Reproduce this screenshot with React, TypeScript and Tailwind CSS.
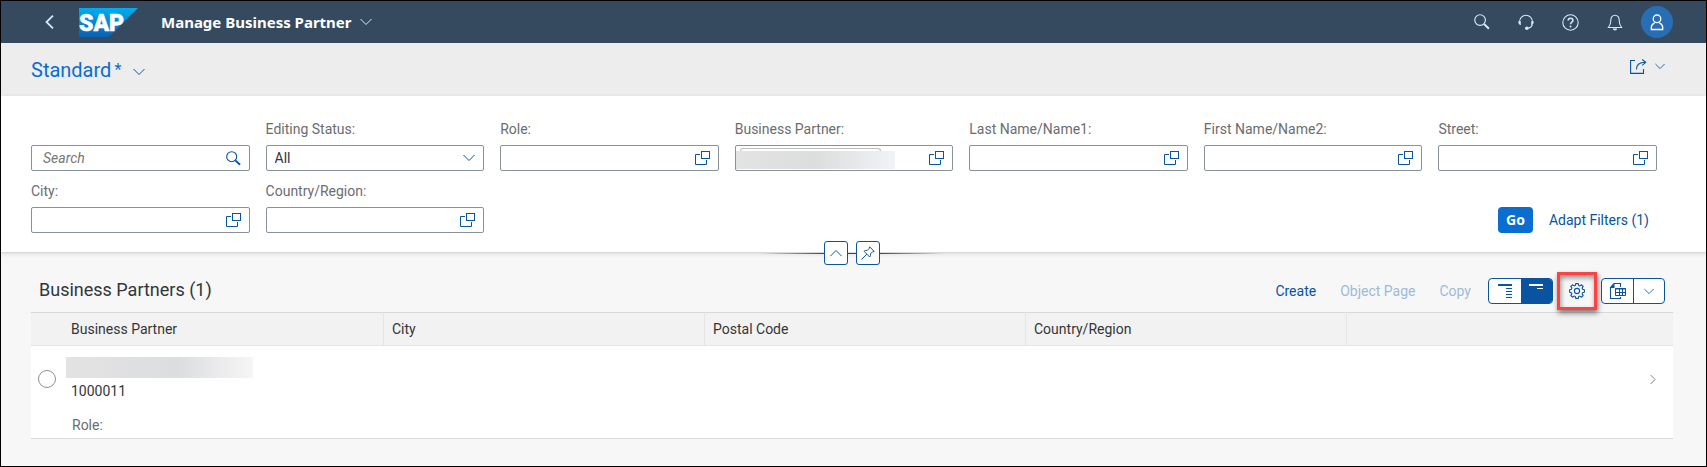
import type { ReactNode } from "react";

type IconProps = { className?: string };

const Chevron = ({ className = "" }: IconProps) => (
  <svg viewBox="0 0 12 8" className={className} fill="none" stroke="currentColor" strokeWidth="1" aria-hidden="true">
    <path d="M0.5 1 6 6.5 11.5 1" />
  </svg>
);

const SearchIcon = ({ className = "" }: IconProps) => (
  <svg viewBox="0 0 15 15" className={className} fill="none" stroke="currentColor" aria-hidden="true">
    <circle cx="5.7" cy="5.7" r="5" strokeWidth="1.1" />
    <path d="M9.4 9.4 14 13.8" strokeWidth="1.9" />
  </svg>
);

const ValueHelpIcon = () => (
  <svg viewBox="0 0 15 15" className="size-[15px]" fill="none" stroke="currentColor" aria-hidden="true">
    <path d="M5 3.5H0.5V13.5H11.5V9" />
    <rect x="6.5" y="0.5" width="8" height="7" />
  </svg>
);

const HeadsetIcon = () => (
  <svg viewBox="0 0 16 16" className="size-4" fill="none" stroke="currentColor" aria-hidden="true">
    <path d="M1.6 8A6.4 6.8 0 0 1 14.4 8" strokeWidth="1.1" />
    <path d="M0.4 7.2h2.4v4C1 11 0 9 0.4 7.2ZM15.6 7.2h-2.4v4C15 11 16 9 15.6 7.2Z" fill="currentColor" stroke="none" />
    <path d="M14.4 10.5C13.6 12.8 12 14.1 9.5 14.3" strokeWidth="1.1" />
    <circle cx="8.8" cy="14.2" r="1.8" fill="currentColor" stroke="none" />
  </svg>
);

const HelpIcon = () => (
  <svg viewBox="0 0 17 17" className="size-[17px]" fill="none" stroke="currentColor" aria-hidden="true">
    <circle cx="8.5" cy="8.5" r="7.7" strokeWidth="1.1" />
    <path d="M6.2 6.6C6.2 5 7.2 4.2 8.5 4.2S10.9 5 10.9 6.4C10.9 8 8.5 8.2 8.5 10.3" strokeWidth="1.6" />
    <circle cx="8.5" cy="12.4" r="1" fill="currentColor" stroke="none" />
  </svg>
);

const BellIcon = () => (
  <svg viewBox="0 0 16 17" className="h-[17px] w-4" fill="none" stroke="currentColor" strokeWidth="1.1" aria-hidden="true">
    <path d="M8 1.2C5.3 1.2 3.9 3.2 3.9 5.8C3.9 9.8 3.2 11.5 1.4 13.5H14.6C12.8 11.5 12.1 9.8 12.1 5.8C12.1 3.2 10.7 1.2 8 1.2Z" />
    <path d="M5.8 14.5H10.2C10 15.8 9.2 16.4 8 16.4S6 15.8 5.8 14.5Z" fill="currentColor" stroke="none" />
  </svg>
);

const PersonIcon = () => (
  <svg viewBox="0 0 14 17" className="h-[17px] w-[14px]" fill="none" stroke="currentColor" strokeWidth="1.3" aria-hidden="true">
    <circle cx="7" cy="4.8" r="3.8" />
    <path d="M4.6 8.8C2.4 9.8 1.3 11.5 1.3 13.5V15.5H12.7V13.5C12.7 11.5 11.6 9.8 9.4 8.8" />
  </svg>
);

const ShareIcon = () => (
  <svg viewBox="0 0 17 15" className="h-[15px] w-[17px]" fill="none" stroke="currentColor" strokeWidth="1.1" aria-hidden="true">
    <path d="M5 1.5H0.6V14.4H13.5V10" />
    <path d="M6.5 10.5C6.3 6 9 3.5 15.5 3.3M12.2 0.5 15.7 3.3 12.2 6.3" />
  </svg>
);

const PinIcon = () => (
  <svg viewBox="0 0 14 14" className="size-[14px]" fill="none" stroke="currentColor" strokeLinejoin="round" aria-hidden="true">
    <path d="M8.6 0.8 13.2 5.4 11.5 5.9 9.4 8C9.7 9.3 9.5 10.2 8.7 11L3 5.3C3.8 4.5 4.7 4.3 6 4.6L8.1 2.5Z" />
    <path d="M5.8 8.2 0.5 13.5" />
  </svg>
);

const GearIcon = () => (
  <svg viewBox="0 0 16 16" className="size-4" fill="none" stroke="currentColor" strokeWidth="1.1" strokeLinejoin="round" aria-hidden="true">
    <path d="M6.7 0.6H9.3L9.7 2.4L10.9 2.9L12.5 1.8L14.2 3.5L13.1 5.1L13.6 6.3L15.4 6.7V9.3L13.6 9.7L13.1 10.9L14.2 12.5L12.5 14.2L10.9 13.1L9.7 13.6L9.3 15.4H6.7L6.3 13.6L5.1 13.1L3.5 14.2L1.8 12.5L2.9 10.9L2.4 9.7L0.6 9.3V6.7L2.4 6.3L2.9 5.1L1.8 3.5L3.5 1.8L5.1 2.9L6.3 2.4Z" />
    <circle cx="8" cy="8" r="2.6" />
  </svg>
);

const DetailsIcon = () => (
  <svg viewBox="0 0 16 16" className="size-4" fill="none" stroke="currentColor" aria-hidden="true">
    <path d="M1 2H15" strokeWidth="2" />
    <path d="M9 5.5H15M9 8.5H15M9 11.5H15M9 14.5H15" />
  </svg>
);

const SummaryIcon = () => (
  <svg viewBox="0 0 16 16" className="size-4" fill="none" stroke="currentColor" aria-hidden="true">
    <path d="M1 2H15" strokeWidth="2" />
    <path d="M9 5.5H15" />
  </svg>
);

const ExportIcon = () => (
  <svg viewBox="0 0 17 17" className="size-[17px]" fill="none" stroke="currentColor" aria-hidden="true">
    <path d="M11.5 4V0.5H5L1.5 4.5V15.5H11.5V14" strokeWidth="1.1" />
    <path d="M1 5 5.5 0V5Z" fill="currentColor" stroke="none" />
    <path d="M6.5 5.5H16.5V12.5H6.5ZM6 6H17M6.5 9.5H16.5M10.5 6V12.5M13.5 6V12.5" />
  </svg>
);

const SapLogo = () => (
  <svg viewBox="0 0 59 29" className="h-[29px] w-[59px]" role="img" aria-label="SAP">
    <defs>
      <linearGradient id="sapBlue" x1="0" y1="0" x2="0" y2="1">
        <stop offset="0" stopColor="#00aeef" />
        <stop offset="1" stopColor="#0a5fb4" />
      </linearGradient>
    </defs>
    <path d="M0 0H59L30 29H0Z" fill="url(#sapBlue)" />
    <text x="0" y="23" fill="#fff" stroke="#fff" strokeWidth="0.5" fontFamily="Roboto, sans-serif" fontWeight="900" fontSize="23">
      SAP
    </text>
  </svg>
);

const inputBox = "flex h-[26px] items-center rounded-[2px] border border-[#89919a] bg-white";

function Field({ id, label, children }: { id: string; label?: string; children: ReactNode }) {
  return (
    <div className="flex min-w-0 flex-col gap-1.5">
      <label htmlFor={id} className="h-5 leading-5 whitespace-nowrap text-[#6a6d70]">
        {label}
      </label>
      {children}
    </div>
  );
}

function ValueHelpField({ id, label, masked = false }: { id: string; label: string; masked?: boolean }) {
  return (
    <Field id={id} label={label}>
      <div className={inputBox}>
        {masked && (
          <span className="flex h-full w-[159px] shrink-0 flex-col pt-0.5">
            <span className="ml-1 h-[3px] w-[141px] rounded-t-[3px] border border-b-0 border-[#bfbfbf]" />
            <span className="h-[18px] bg-linear-to-r from-[#e3e3e3] via-[#dcdddd] via-50% to-[#f2f3f5]" />
          </span>
        )}
        <input id={id} type="text" className="h-full w-0 min-w-0 flex-1 bg-transparent px-2 outline-none" />
        <button type="button" aria-label={`Select ${label}`} className="mr-2 text-[#0854a0]">
          <ValueHelpIcon />
        </button>
      </div>
    </Field>
  );
}

const columns = ["City", "Postal Code", "Country/Region"];

export default function App() {
  return (
    <div className="flex min-h-screen flex-col border border-black bg-[#f7f7f7] font-[Roboto,'Liberation_Sans',sans-serif] text-sm text-[#32363a]">
      <header className="flex h-[42px] items-center justify-between bg-[#354a5f] pr-[33px] pl-[40px] text-[#d1e8ff]">
        <div className="flex items-center">
          <button type="button" aria-label="Back" className="flex w-4 justify-center">
            <svg viewBox="0 0 9 14" className="h-[14px] w-[9px]" fill="none" stroke="currentColor" strokeWidth="1.8" aria-hidden="true">
              <path d="M8 0.7 1.5 7 8 13.3" />
            </svg>
          </button>
          <a href="#home" className="ml-[22px]">
            <SapLogo />
          </a>
          <button type="button" className="ml-[23px] flex items-center gap-2">
            <span className="font-['Noto_Sans',sans-serif] text-[15px] leading-5 font-bold text-white">Manage Business Partner</span>
            <Chevron className="h-2 w-3" />
          </button>
        </div>
        <div className="flex items-center gap-7">
          <button type="button" aria-label="Search">
            <SearchIcon className="size-4" />
          </button>
          <button type="button" aria-label="Support">
            <HeadsetIcon />
          </button>
          <button type="button" aria-label="Help">
            <HelpIcon />
          </button>
          <button type="button" aria-label="Notifications">
            <BellIcon />
          </button>
          <button type="button" aria-label="Profile" className="-ml-2.5 flex size-8 items-center justify-center rounded-full bg-[#286eb4] text-white">
            <PersonIcon />
          </button>
        </div>
      </header>

      <div className="flex h-[53px] items-center justify-between bg-[#ededed] pr-[41px] pl-[30px]">
        <button type="button" className="flex items-center text-xl text-[#0a6ed1]">
          <span>Standard</span>
          <span className="ml-[3px] text-base">*</span>
          <Chevron className="mt-1 ml-3 h-2 w-3 text-[#0854a0]" />
        </button>
        <button type="button" aria-label="Share" className="mb-1.5 flex items-center gap-2 text-[#0854a0]">
          <ShareIcon />
          <Chevron className="h-[7px] w-[10px]" />
        </button>
      </div>

      <section className="relative border-b border-[#d9d9d9] bg-white pt-[23px] pr-[49px] pb-[19px] pl-[30px] shadow-[0_1px_4px_rgba(0,0,0,0.12)]">
        <div className="grid grid-cols-7 gap-x-4 gap-y-2.5">
          <Field id="search">
            <div className={inputBox}>
              <input
                id="search"
                type="search"
                aria-label="Search"
                placeholder="Search"
                className="h-full w-0 min-w-0 flex-1 bg-transparent pl-[11px] outline-none placeholder:text-[#74777a] placeholder:italic"
              />
              <button type="button" aria-label="Run search" className="mr-2 text-[#0854a0]">
                <SearchIcon className="size-[15px]" />
              </button>
            </div>
          </Field>
          <Field id="status" label="Editing Status:">
            <div className={`${inputBox} relative`}>
              <select id="status" className="h-full w-full appearance-none bg-transparent pr-8 pl-2 outline-none">
                <option>All</option>
              </select>
              <Chevron className="pointer-events-none absolute right-2 h-2 w-3 text-[#0854a0]" />
            </div>
          </Field>
          <ValueHelpField id="role" label="Role:" />
          <ValueHelpField id="partner" label="Business Partner:" masked />
          <ValueHelpField id="name1" label="Last Name/Name1:" />
          <ValueHelpField id="name2" label="First Name/Name2:" />
          <ValueHelpField id="street" label="Street:" />
          <ValueHelpField id="city" label="City:" />
          <ValueHelpField id="country" label="Country/Region:" />
          <div className="col-span-5 flex items-end justify-end gap-2">
            <button type="button" className="h-[26px] rounded bg-[#0a6ed1] px-2 font-['Noto_Sans',sans-serif] font-bold text-white">
              Go
            </button>
            <button type="button" className="h-[26px] px-2 text-[#0854a0]">
              Adapt Filters (1)
            </button>
          </div>
        </div>
        <div className="absolute inset-x-0 -bottom-[13px] flex items-center justify-center pr-1">
          <span className="h-px w-16 bg-linear-to-r from-transparent to-[#0854a0]" />
          <button type="button" aria-label="Collapse header" className="flex size-6 items-center justify-center rounded-[3px] border border-[#0854a0] bg-white text-[#0854a0]">
            <Chevron className="h-2 w-3 rotate-180" />
          </button>
          <span className="h-px w-2 bg-[#0854a0]" />
          <button type="button" aria-label="Pin header" className="flex size-6 items-center justify-center rounded-[3px] border border-[#0854a0] bg-white text-[#0854a0]">
            <PinIcon />
          </button>
          <span className="h-px w-16 bg-linear-to-l from-transparent to-[#0854a0]" />
        </div>
      </section>

      <main className="pt-[18px] pr-[33px] pb-[27px] pl-[30px]">
        <div className="flex h-[41px] items-center justify-between pr-2 pb-[3px] pl-2">
          <h2 className="text-lg">Business Partners (1)</h2>
          <div className="flex items-center pt-0.5 text-[#0854a0]">
            <div className="mr-[17px] flex gap-6">
              <button type="button">Create</button>
              <button type="button" disabled className="text-[#9cbbd9]">
                Object Page
              </button>
              <button type="button" disabled className="text-[#9cbbd9]">
                Copy
              </button>
            </div>
            <div className="flex h-[26px] w-[65px] overflow-hidden rounded border border-[#0854a0] bg-white">
              <button type="button" aria-label="Show details" className="flex flex-1 items-center justify-center">
                <DetailsIcon />
              </button>
              <button type="button" aria-label="Hide details" aria-pressed="true" className="flex flex-1 items-center justify-center bg-[#0854a0] text-white">
                <SummaryIcon />
              </button>
            </div>
            <button type="button" aria-label="Settings" className="mx-1 flex h-[38px] w-10 items-center justify-center border-3 border-[#fc4242] shadow-[1px_3px_5px_rgba(0,0,0,0.5),inset_1px_3px_5px_rgba(0,0,0,0.4)]">
              <GearIcon />
            </button>
            <div className="flex h-[26px] w-16 rounded border border-[#0854a0] bg-white">
              <button type="button" aria-label="Export" className="flex flex-1 items-center justify-center border-r border-[#0854a0]">
                <ExportIcon />
              </button>
              <button type="button" aria-label="Export options" className="flex flex-1 items-center justify-center">
                <Chevron className="h-[7px] w-[10px]" />
              </button>
            </div>
          </div>
        </div>

        <table className="w-full table-fixed border-separate border-spacing-0 text-left">
          <colgroup>
            <col className="w-8" />
            <col />
            <col />
            <col />
            <col />
            <col className="w-[326px]" />
          </colgroup>
          <thead className="bg-[#f2f2f2]">
            <tr className="h-[34px]">
              <th aria-label="Selection" className="border-t border-b border-t-[#d9d9d9] border-b-[#e5e5e5] p-0" />
              <th className="border-t border-r border-b border-[#e5e5e5] border-t-[#d9d9d9] p-0 pl-2 font-normal">Business Partner</th>
              {columns.map((name) => (
                <th key={name} className="border-t border-r border-b border-[#e5e5e5] border-t-[#d9d9d9] p-0 pl-2 font-normal">
                  {name}
                </th>
              ))}
              <th aria-label="Navigation" className="border-t border-b border-t-[#d9d9d9] border-b-[#e5e5e5] p-0" />
            </tr>
          </thead>
          <tbody className="bg-white">
            <tr className="h-[93px]">
              <td className="border-b border-[#d9d9d9] p-0 pb-[26px] pl-[7px]">
                <input type="radio" name="partner-row" aria-label="Select 1000011" className="block size-[18px] appearance-none rounded-full border border-[#89919a] bg-white" />
              </td>
              <td className="border-b border-[#d9d9d9] p-0 pt-[11px] pl-[3px] align-top">
                <div className="h-[21px] w-[187px] bg-linear-to-r from-[#e3e3e3] via-[#dcdde0] via-60% to-[#f6f6f6]" />
                <div className="mt-[3px] pl-[5px] leading-5">1000011</div>
                <div className="mt-3.5 pl-1.5 leading-5 text-[#6a6d70]">Role:</div>
              </td>
              <td className="border-b border-[#d9d9d9] p-0" />
              <td className="border-b border-[#d9d9d9] p-0" />
              <td className="border-b border-[#d9d9d9] p-0" />
              <td className="border-b border-[#d9d9d9] p-0 pr-[14px] pb-[26px]">
                <button type="button" aria-label="Open 1000011" className="ml-auto flex w-3 justify-center text-[#6a6d70]">
                  <Chevron className="h-[7px] w-[10px] -rotate-90" />
                </button>
              </td>
            </tr>
          </tbody>
        </table>
      </main>
    </div>
  );
}
